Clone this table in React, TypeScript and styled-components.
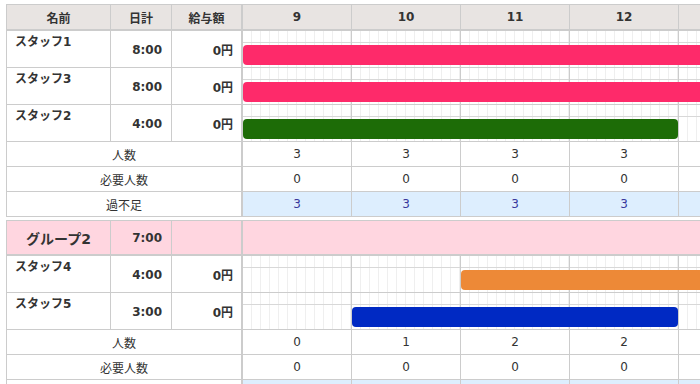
import React from 'react';
import styled, { createGlobalStyle } from 'styled-components';

const HOURS = [9, 10, 11, 12, 13];
const HOUR_W = 109;
const FIRST_HOUR = HOURS[0];

type Shift = { name: string; total: string; pay: string; start: number; hours: number; color: string };
type Group = { title?: string; total?: string; staff: Shift[] };

const groups: Group[] = [
    {
        staff: [
            { name: 'スタッフ1', total: '8:00', pay: '0円', start: 9, hours: 8, color: '#fe2a6a' },
            { name: 'スタッフ3', total: '8:00', pay: '0円', start: 9, hours: 8, color: '#fe2a6a' },
            { name: 'スタッフ2', total: '4:00', pay: '0円', start: 9, hours: 4, color: '#1d6c07' },
        ],
    },
    {
        title: 'グループ2',
        total: '7:00',
        staff: [
            { name: 'スタッフ4', total: '4:00', pay: '0円', start: 11, hours: 4, color: '#ed8937' },
            { name: 'スタッフ5', total: '3:00', pay: '0円', start: 10, hours: 3, color: '#0029c3' },
        ],
    },
];

const GlobalStyle = createGlobalStyle`
    html, body {
        margin: 0;
        overflow: hidden;
        background: #fff;
    }
    body {
        font-family: 'DejaVu Sans', 'Noto Sans CJK JP', sans-serif;
        font-size: 12px;
        color: #333;
    }
`;

const Page = styled.div`
    padding: 4px 0 0 6px;
    width: max-content;
`;

const Table = styled.div`
    border-left: 1px solid #ccc;
    border-top: 1px solid #ccc;
    & + & {
        margin-top: 3px;
    }
`;

const Row = styled.div<{ $h: number; $thick?: boolean; $bg?: string }>`
    display: flex;
    height: ${p => p.$h}px;
    border-bottom: ${p => (p.$thick ? 2 : 1)}px solid #ccc;
    background: ${p => p.$bg || '#fff'};
`;

const Cell = styled.div<{ $w: number; $border?: number; $align?: string; $bg?: string }>`
    width: ${p => p.$w}px;
    flex: none;
    box-sizing: border-box;
    border-right: ${p => p.$border ?? 1}px solid #ccc;
    display: flex;
    align-items: center;
    justify-content: ${p => p.$align || 'center'};
    background: ${p => p.$bg || 'transparent'};
`;

const HeaderCell = styled(Cell)`
    background: #e8e4e2;
    font-weight: 700;
`;

const NameCell = styled.div`
    width: 104px;
    flex: none;
    box-sizing: border-box;
    padding: 3px 0 0 8px;
    border-right: 1px solid #ccc;
    font-weight: 700;
    line-height: 16px;
`;

const NumCell = styled(Cell)<{ $pad?: number }>`
    font-weight: 700;
    padding-right: ${p => p.$pad ?? 9}px;
    padding-top: 1px;
`;

const GroupName = styled(Cell)`
    font-size: 14px;
    font-weight: 700;
`;

const Timeline = styled.div`
    position: relative;
    display: flex;
    overflow: hidden;
`;

const Slot = styled.div`
    width: 109px;
    flex: none;
    box-sizing: border-box;
    border-right: 1px solid #ccc;
    display: flex;
    flex-direction: column;
    background: repeating-linear-gradient(90deg, transparent 0 8px, #efefef 8px 9px);
`;

const SlotTop = styled.div`
    height: 11px;
    border-bottom: 1px solid #d8d8d8;
`;

const Bar = styled.div<{ $color: string }>`
    position: absolute;
    top: 14px;
    height: 20px;
    border-radius: 4px;
    background: ${p => p.$color};
`;

const CountCell = styled(Cell)<{ $diff?: boolean }>`
    background: ${p => (p.$diff ? '#ddeefe' : 'transparent')};
    color: ${p => (p.$diff ? '#38389c' : '#333')};
`;

const GroupFill = styled.div`
    width: ${HOURS.length * HOUR_W}px;
`;

const countAt = (staff: Shift[], h: number) => staff.filter(s => h >= s.start && h < s.start + s.hours).length;

const StaffRow = ({ shift }: { shift: Shift }) => (
    <Row $h={36}>
        <NameCell>{shift.name}</NameCell>
        <NumCell $w={61} $align="flex-end">
            {shift.total}
        </NumCell>
        <NumCell $w={71} $border={2} $pad={8} $align="flex-end">
            {shift.pay}
        </NumCell>
        <Timeline>
            {HOURS.map(h => (
                <Slot key={h}>
                    <SlotTop />
                </Slot>
            ))}
            <Bar
                $color={shift.color}
                style={{ left: (shift.start - FIRST_HOUR) * HOUR_W, width: shift.hours * HOUR_W - 1 }}
            />
        </Timeline>
    </Row>
);

const SummaryRows = ({ staff }: { staff: Shift[] }) => {
    const counts = HOURS.map(h => countAt(staff, h));
    const required = HOURS.map(() => 0);
    return (
        <>
            <Row $h={24}>
                <Cell $w={236} $border={2}>人数</Cell>
                {counts.map((c, i) => (
                    <CountCell key={i} $w={HOUR_W}>
                        {c}
                    </CountCell>
                ))}
            </Row>
            <Row $h={24}>
                <Cell $w={236} $border={2}>必要人数</Cell>
                {required.map((c, i) => (
                    <CountCell key={i} $w={HOUR_W}>
                        {c}
                    </CountCell>
                ))}
            </Row>
            <Row $h={24}>
                <Cell $w={236} $border={2}>過不足</Cell>
                {counts.map((c, i) => (
                    <CountCell key={i} $w={HOUR_W} $diff>
                        {c - required[i]}
                    </CountCell>
                ))}
            </Row>
        </>
    );
};

export default function App() {
    return (
        <Page>
            <GlobalStyle />
            {groups.map((g, gi) => (
                <Table key={gi}>
                    {gi === 0 ? (
                        <Row $h={24} $thick>
                            <HeaderCell $w={104}>名前</HeaderCell>
                            <HeaderCell $w={61}>日計</HeaderCell>
                            <HeaderCell $w={71} $border={2}>
                                給与額
                            </HeaderCell>
                            {HOURS.map(h => (
                                <HeaderCell key={h} $w={HOUR_W}>
                                    {h}
                                </HeaderCell>
                            ))}
                        </Row>
                    ) : (
                        <Row $h={33} $thick $bg="#ffd6e0">
                            <GroupName $w={104}>{g.title}</GroupName>
                            <NumCell $w={61} $align="flex-end">
                                {g.total}
                            </NumCell>
                            <Cell $w={71} $border={2} />
                            <GroupFill />
                        </Row>
                    )}
                    {g.staff.map(s => (
                        <StaffRow key={s.name} shift={s} />
                    ))}
                    <SummaryRows staff={g.staff} />
                </Table>
            ))}
        </Page>
    );
}
